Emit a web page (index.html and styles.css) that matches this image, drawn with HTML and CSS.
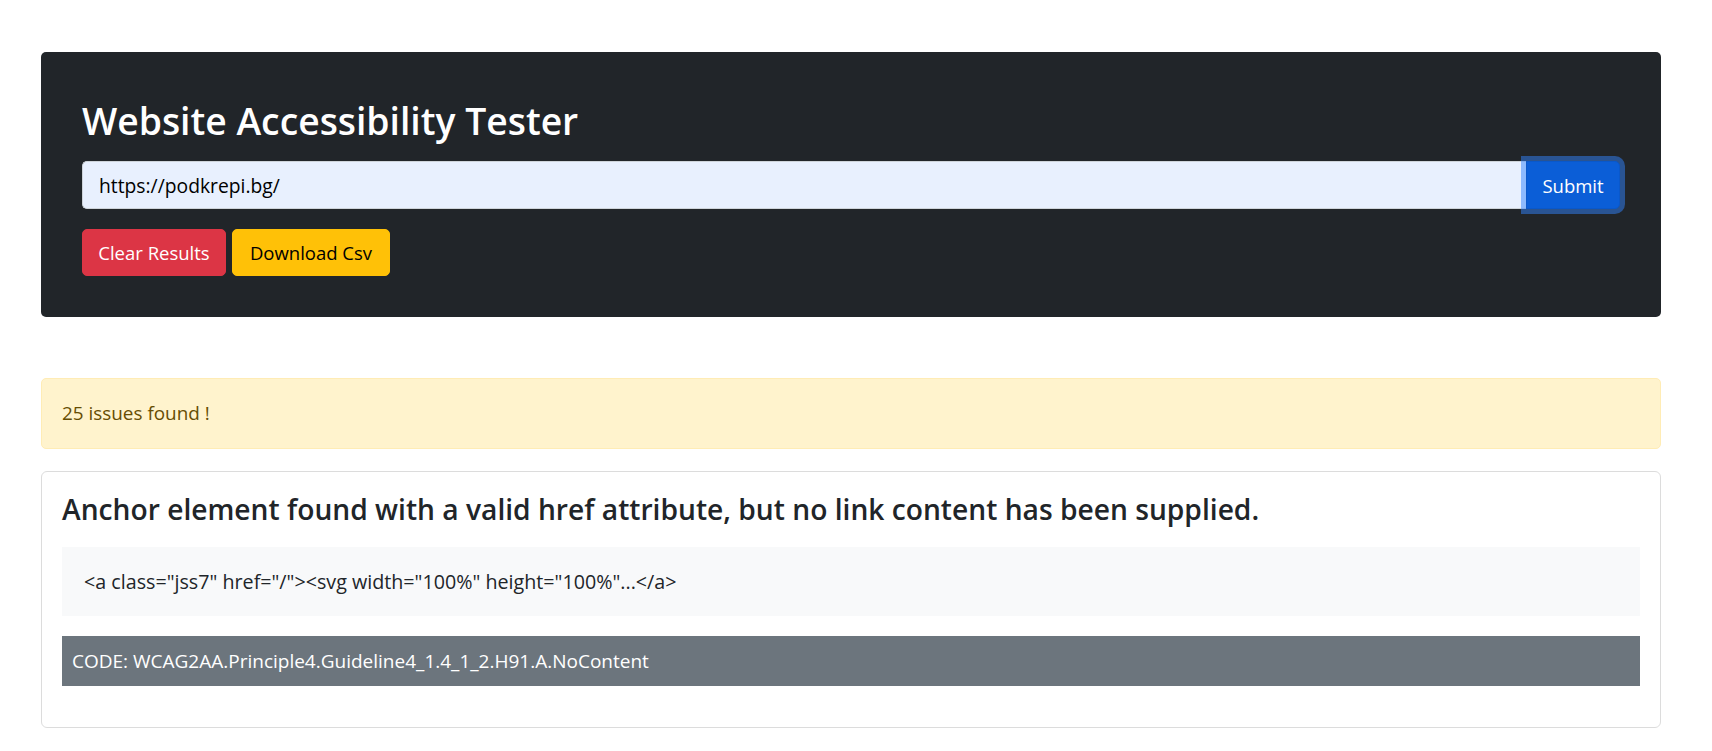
FILE: index.html
```html
<!DOCTYPE html>
<html lang="en">
<head>
<meta charset="utf-8">
<title>Website Accessibility Tester</title>
<link rel="stylesheet" href="styles.css">
</head>
<body>
<main class="page">
  <section class="hero">
    <h1 class="hero-title">Website Accessibility Tester</h1>
    <form class="url-form">
      <div class="input-group">
        <input class="url-input" type="text" value="https://podkrepi.bg/">
        <button class="btn btn-submit" type="button">Submit</button>
      </div>
    </form>
    <div class="actions">
      <button class="btn btn-danger" type="button">Clear Results</button>
      <button class="btn btn-warning" type="button">Download Csv</button>
    </div>
  </section>

  <div class="alert">25 issues found !</div>

  <article class="issue-card">
    <h3 class="issue-title">Anchor element found with a valid href attribute, but no link content has been supplied.</h3>
    <div class="issue-code">&lt;a class="jss7" href="/"&gt;&lt;svg width="100%" height="100%"...&lt;/a&gt;</div>
    <div class="issue-rule">CODE: WCAG2AA.Principle4.Guideline4_1.4_1_2.H91.A.NoContent</div>
  </article>
</main>
</body>
</html>
```

FILE: styles.css
```css
* { box-sizing: border-box; }

html, body {
  margin: 0;
  padding: 0;
  background: #ffffff;
}

body {
  font-family: "Open Sans", "Noto Sans", sans-serif;
  font-size: 16px;
  line-height: 1.5;
  color: #212529;
}

.page {
  width: 1620px;
  margin: 52px 0 0 41px;
}

.hero {
  background: #212529;
  border-radius: 5px;
  padding: 45px 41px 41px 41px;
}

.hero-title {
  margin: 0 0 16px 0;
  font-size: 37.3px;
  line-height: 48px;
  font-weight: 600;
  color: #ffffff;
}

.url-form { margin: 0; }

.input-group {
  display: flex;
  align-items: stretch;
}

.url-input {
  flex: 1 1 auto;
  min-width: 0;
  height: 48px;
  padding: 8px 16px;
  font-family: inherit;
  font-size: 19.3px;
  color: #000000;
  background: #e8f0fe;
  border: 1px solid #ced4da;
  border-right: 0;
  border-radius: 5px 0 0 5px;
  outline: none;
}

.btn {
  font-family: inherit;
  font-size: 18.5px;
  line-height: 29px;
  padding: 8px 0;
  border: 1px solid transparent;
  border-radius: 5px;
  white-space: nowrap;
  text-align: center;
  cursor: pointer;
}

.btn-submit {
  position: relative;
  color: #ffffff;
  background: #0b5ed7;
  border-color: #0a58ca;
  border-radius: 0 5px 5px 0;
  width: 94px;
  box-shadow: 0 0 0 5px rgba(49, 132, 253, 0.5);
}

.actions {
  display: flex;
  gap: 6px;
  margin-top: 20px;
}

.btn-danger {
  color: #ffffff;
  background: #dc3545;
  border-color: #dc3545;
  width: 144px;
}

.btn-warning {
  color: #000000;
  background: #ffc107;
  border-color: #ffc107;
  width: 158px;
}

.alert {
  margin-top: 61px;
  padding: 20px;
  font-size: 18.9px;
  line-height: 29px;
  color: #664d03;
  background: #fff3cd;
  border: 1px solid #ffecb5;
  border-radius: 5px;
}

.issue-card {
  margin-top: 22px;
  padding: 20px 20px 41px 20px;
  border: 1px solid #dcdcdc;
  border-radius: 6px;
  background: #ffffff;
}

.issue-title {
  margin: 0 0 21px 0;
  font-size: 28.2px;
  line-height: 34px;
  font-weight: 600;
  color: #212529;
}

.issue-code {
  padding: 20px 22px;
  font-size: 19.7px;
  line-height: 29px;
  background: #f8f9fa;
  color: #212529;
}

.issue-rule {
  margin-top: 20px;
  padding: 10px;
  font-size: 19px;
  line-height: 30px;
  color: #ffffff;
  background: #6c757d;
}
```
